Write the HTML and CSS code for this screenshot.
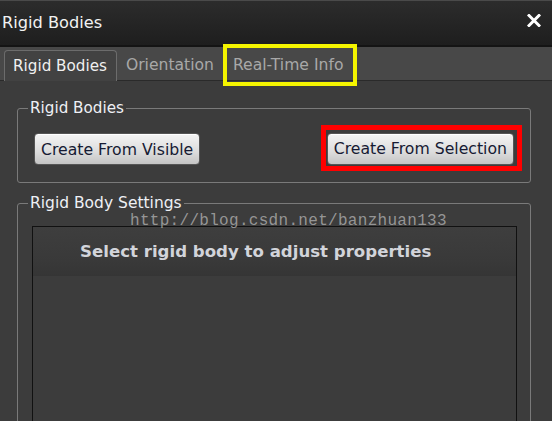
FILE: index.html
```html
<!DOCTYPE html>
<html>
<head>
<meta charset="utf-8">
<link rel="stylesheet" href="styles.css">
</head>
<body>
<div class="window">
  <div class="titlebar">
    <span class="title">Rigid Bodies</span>
    <svg class="close" width="14" height="13" viewBox="0 0 14 13"><path d="M2 1.5 L12 11.5 M12 1.5 L2 11.5" stroke="#fff" stroke-width="3" stroke-linecap="square"/></svg>
  </div>
  <div class="tabstrip">
    <div class="tab active">Rigid Bodies</div>
    <div class="tab">Orientation</div>
    <div class="tab marked">Real-Time Info</div>
  </div>
  <div class="content">
    <fieldset class="group g1">
      <legend>Rigid Bodies</legend>
      <div class="btnrow">
        <button class="btn">Create From Visible</button>
        <div class="redmark"><button class="btn">Create From Selection</button></div>
      </div>
    </fieldset>
    <fieldset class="group g2">
      <legend>Rigid Body Settings</legend>
      <div class="panel">
        <div class="panelhead">Select rigid body to adjust properties</div>
      </div>
    </fieldset>
    <div class="watermark">http://blog.csdn.net/banzhuan133</div>
  </div>
</div>
</body>
</html>
```

FILE: styles.css
```css
html, body { margin: 0; padding: 0; }
body { background: #3c3c3c; font-family: "DejaVu Sans", Verdana, sans-serif; }
.window { width: 552px; height: 421px; overflow: hidden; background: #3c3c3c; display: flex; flex-direction: column; }
.titlebar {
  flex: none; box-sizing: border-box; height: 47px;
  border-top: 1px solid #4a4a4a;
  background: linear-gradient(#2c2c2c, #1e1e1e);
  display: flex; align-items: center; justify-content: space-between;
  padding: 0 11px 2px 2px;
  border-bottom: 2px solid #141414;
}
.title { color: #f2f2f2; font-size: 16.2px; }
.close { display: block; margin-top: -3px; }
.tabstrip {
  height: 34px; flex: none; box-sizing: border-box;
  background: #484848; border-bottom: 1px solid #2a2a2a;
  display: flex; align-items: flex-end; padding-left: 4px;
}
.tab { font-size: 15.6px; color: #a8a8a8; padding: 0 7px 0 9px; height: 30px; line-height: 30px; box-sizing: border-box; white-space: nowrap; }
.tab.active {
  color: #f0f0f0; background: #424242; font-size: 15.2px;
  border: 1px solid #6c6c6c; border-bottom: none; border-radius: 4px 4px 0 0;
  padding: 0 9px 0 8px; height: 31px; margin-bottom: -1px; line-height: 30px;
}
.tab.marked { margin-left: 8px; padding: 0 8px 0 4px; outline: 4px solid #f5f500; outline-offset: 2px; }
.content { position: relative; padding: 0 21px 0 17px; }
.group {
  border: 1px solid #7a7a7a; border-radius: 3px; margin: 0; min-width: 0;
}
.group legend { color: #eef0f5; font-size: 15.5px; line-height: 18px; padding: 0 2px; }
.g1 { margin-top: 18px; padding: 16px 16px 17px 16px; }
.g1 legend { margin-left: -6px; font-size: 15.2px; }
.btnrow { display: flex; justify-content: space-between; align-items: center; }
.btn {
  font-family: "DejaVu Sans", Verdana, sans-serif; font-size: 15.7px; color: #161a33;
  height: 32px; padding: 0 6px; border: 1px solid #555; border-radius: 4px;
  background: linear-gradient(#f4f4f4, #dcdcdc 60%, #c4c4c4);
  box-shadow: inset 0 1px 0 #fff; display: block; white-space: nowrap;
}
.redmark { border: 5px solid #f00; padding: 3px 3px 1px 1px; margin: -9px -8px -6px 0; }
.g2 { margin-top: 11px; padding: 14px 13px 0 14px; }
.g2 legend { margin-left: -4px; }
.panel { height: 260px; border: 1px solid #111; background: #3c3c3c; }
.panelhead {
  height: 49px; line-height: 49px; box-sizing: border-box;
  background: linear-gradient(#3e3e3e, #393939 70%, #353535);
  color: #d2d4da; font-weight: bold; font-size: 16.6px; padding-left: 47px; white-space: nowrap;
}
.watermark {
  position: absolute; left: 130px; top: 131px; letter-spacing: 0.3px;
  font-family: "Liberation Mono", monospace; font-size: 16px; color: rgba(190,190,190,0.7);
  pointer-events: none;
}
```
